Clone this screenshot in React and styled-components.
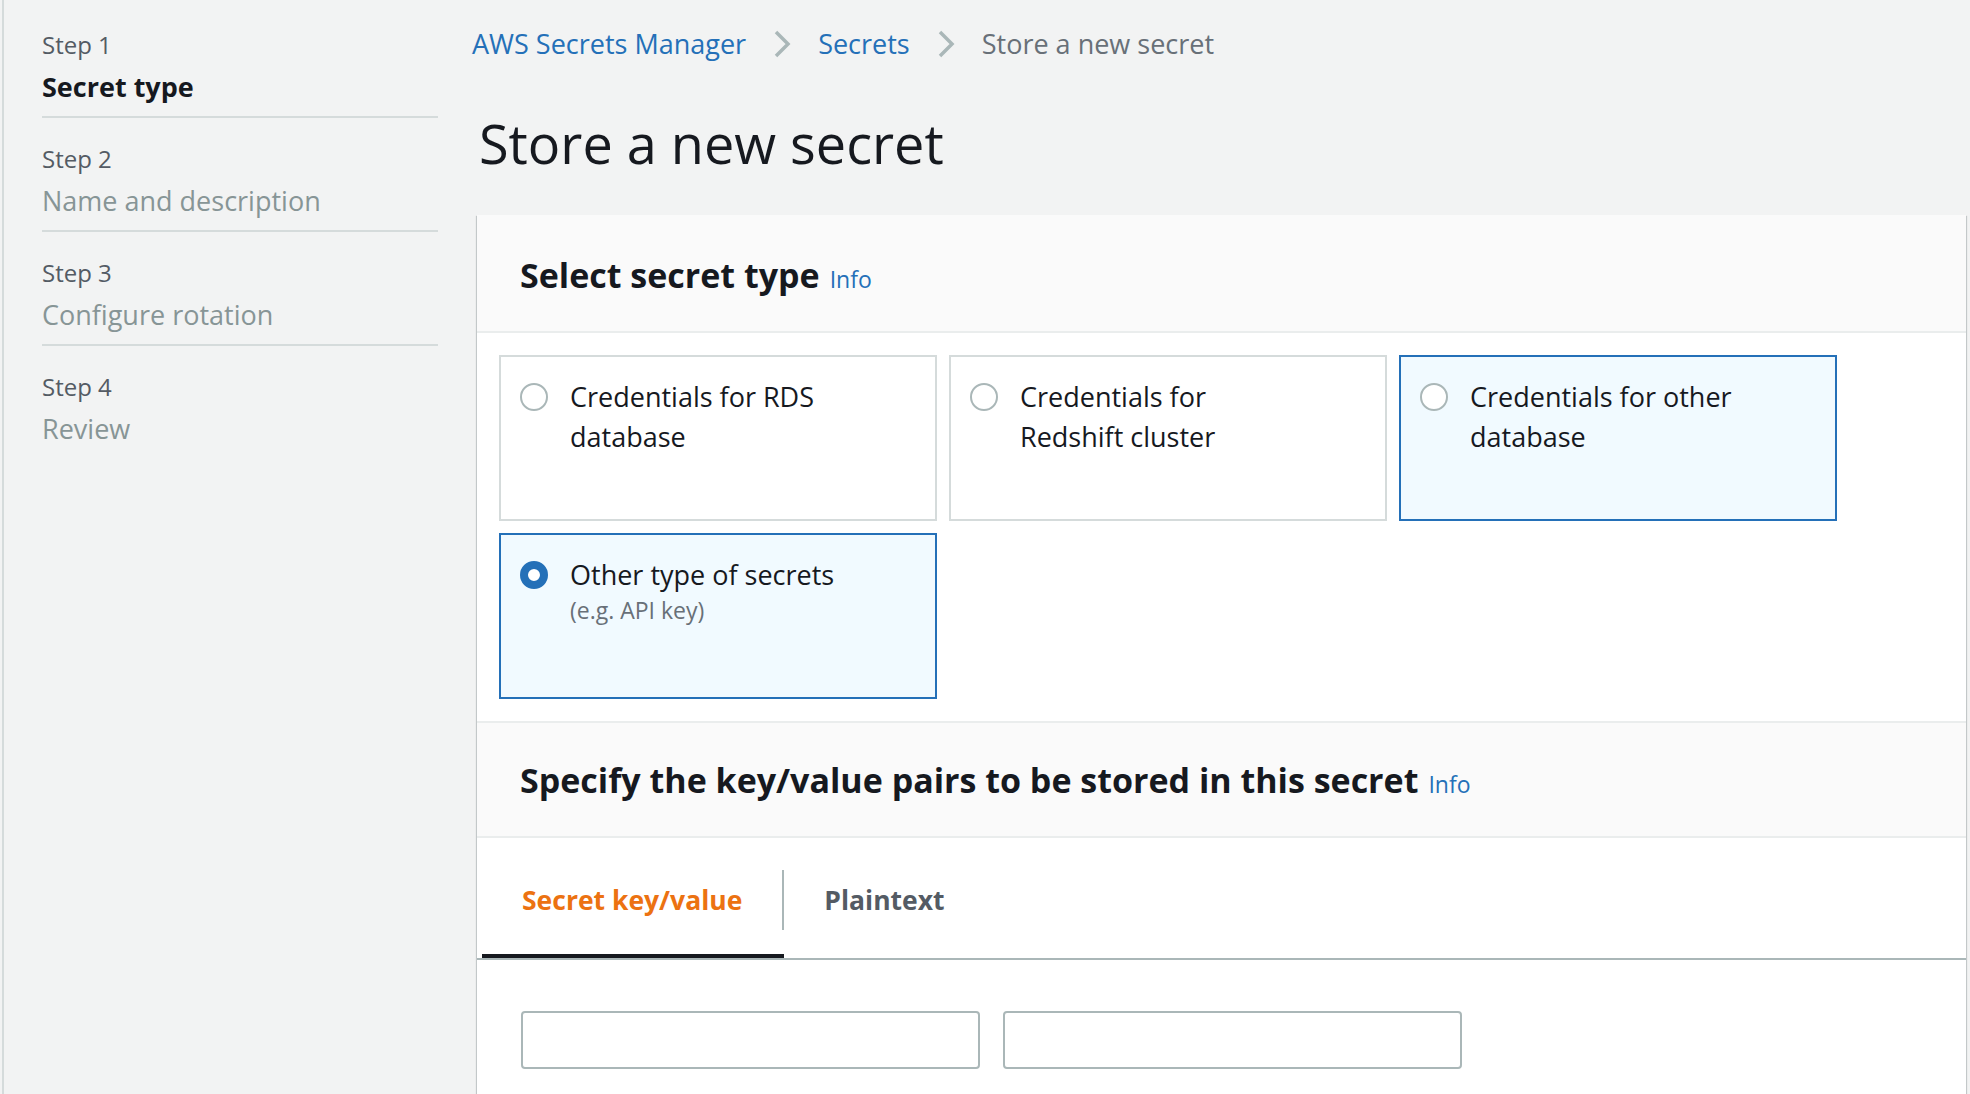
import React, { useState } from "react";
import styled, { createGlobalStyle } from "styled-components";

const GlobalStyle = createGlobalStyle`
  html, body {
    margin: 0;
    height: 100%;
    overflow: hidden;
  }
  body {
    background: #f2f3f3;
    font-family: "Open Sans", "Liberation Sans", sans-serif;
    color: #16191f;
  }
`;

const Page = styled("div")`
  display: grid;
  grid-template-columns: 472px 1fr;
  height: 100vh;
`;

const Sidebar = styled("nav")`
  margin-left: 2px;
  border-left: 2px solid #d5dbdb;
  padding: 4px 34px 0 38px;
`;

const StepItem = styled("div")`
  padding: 25px 0 9px;
  border-bottom: ${props => (props.last ? "none" : "2px solid #d5dbdb")};
`;

const StepLabel = styled("div")`
  font-size: 24px;
  line-height: 32px;
  color: #545b64;
`;

const StepTitle = styled("div")`
  margin-top: 6px;
  font-size: 27px;
  line-height: 40px;
  font-weight: ${props => (props.active ? 700 : 400)};
  color: ${props => (props.active ? "#16191f" : "#879596")};
`;

const Main = styled("main")`
  padding: 24px 4px 0 0;
  min-width: 0;
`;

const Breadcrumbs = styled("div")`
  display: flex;
  align-items: center;
  font-size: 27px;
  line-height: 40px;
`;

const Crumb = styled("span")`
  color: ${props => (props.current ? "#687078" : "#2470b8")};
`;

const Chevron = styled("svg")`
  margin: 0 27px;
  flex: none;
`;

const PageTitle = styled("h1")`
  margin: 47px 0 40px 7px;
  font-size: 54px;
  line-height: 64px;
  font-weight: 400;
  color: #16191f;
`;

const Card = styled("section")`
  margin-left: 5px;
  background: #fff;
  box-shadow: 0 1px 1px 0 rgba(0, 28, 36, 0.3), 1px 1px 1px 0 rgba(0, 28, 36, 0.15),
    -1px 1px 1px 0 rgba(0, 28, 36, 0.15);
`;

const CardHeader = styled("div")`
  background: #fafafa;
  padding: ${props => (props.divided ? "35px" : "38px")} 40px 34px 43px;
  border-top: ${props => (props.divided ? "2px solid #eaeded" : "none")};
  border-bottom: 2px solid #eaeded;
`;

const Heading = styled("h2")`
  margin: 0;
  font-size: 34px;
  line-height: 44px;
  font-weight: 700;
  color: #16191f;
`;

const InfoLink = styled("a")`
  margin-left: 10px;
  font-size: 23px;
  line-height: 1;
  font-weight: 400;
  color: #2470b8;
  text-decoration: none;
`;

const TileGrid = styled("div")`
  display: grid;
  grid-template-columns: repeat(3, 438px);
  grid-auto-rows: 166px;
  gap: 12px;
  padding: 22px 20px 22px 22px;
`;

const Tile = styled("label")`
  display: flex;
  align-items: flex-start;
  gap: 22px;
  box-sizing: border-box;
  padding: 20px 19px 0;
  border: 2px solid ${props => (props.highlighted ? "#2470b8" : "#d5dbdb")};
  background: ${props => (props.highlighted ? "#f1faff" : "#fff")};
  cursor: pointer;
`;

const Radio = styled("span")`
  flex: none;
  box-sizing: border-box;
  width: 28px;
  height: 28px;
  margin-top: 6px;
  border-radius: 50%;
  background: #fff;
  border: ${props => (props.checked ? "8px solid #2470b8" : "2px solid #aab7b8")};
`;

const TileText = styled("div")`
  max-width: 280px;
`;

const TileTitle = styled("div")`
  font-size: 27px;
  line-height: 40px;
  color: #16191f;
`;

const TileHint = styled("div")`
  font-size: 23px;
  line-height: 30px;
  color: #687078;
`;

const TabBar = styled("div")`
  display: flex;
  padding: 0 5px;
  border-bottom: 2px solid #aab7b8;
`;

const Tab = styled("button")`
  padding: 32px 0 24px;
  border: none;
  border-bottom: 4px solid ${props => (props.active ? "#16191f" : "transparent")};
  background: none;
  font-family: inherit;
  cursor: pointer;
`;

const TabLabel = styled("span")`
  display: block;
  padding: 0 40px;
  font-size: 26.5px;
  line-height: 60px;
  font-weight: 700;
  color: ${props => (props.active ? "#ec7211" : "#545b64")};
  border-right: ${props => (props.divider ? "2px solid #aab7b8" : "none")};
`;

const PairRow = styled("div")`
  display: flex;
  gap: 23px;
  padding: 51px 40px 40px 44px;
`;

const TextInput = styled("input")`
  box-sizing: border-box;
  width: 459px;
  height: 58px;
  border: 2px solid #aab7b8;
  border-radius: 4px;
  background: #fff;
  font-family: inherit;
  font-size: 24px;
  padding: 0 14px;
`;

const steps = [
  { label: "Step 1", title: "Secret type" },
  { label: "Step 2", title: "Name and description" },
  { label: "Step 3", title: "Configure rotation" },
  { label: "Step 4", title: "Review" }
];

const secretTypes = [
  { id: "rds", title: "Credentials for RDS database" },
  { id: "redshift", title: "Credentials for Redshift cluster" },
  { id: "other-db", title: "Credentials for other database", hover: true },
  { id: "other", title: "Other type of secrets", hint: "(e.g. API key)" }
];

const ChevronIcon = () => (
  <Chevron width="18" height="30" viewBox="0 0 18 30">
    <path d="M3 3 L15 15 L3 27" fill="none" stroke="#aab7b8" strokeWidth="3.5" />
  </Chevron>
);

export default function App() {
  const [selected, setSelected] = useState("other");
  const [tab, setTab] = useState("kv");

  return (
    <Page>
      <GlobalStyle />
      <Sidebar>
        {steps.map((s, i) => (
          <StepItem key={s.label} last={i === steps.length - 1}>
            <StepLabel>{s.label}</StepLabel>
            <StepTitle active={i === 0}>{s.title}</StepTitle>
          </StepItem>
        ))}
      </Sidebar>

      <Main>
        <Breadcrumbs>
          <Crumb>AWS Secrets Manager</Crumb>
          <ChevronIcon />
          <Crumb>Secrets</Crumb>
          <ChevronIcon />
          <Crumb current>Store a new secret</Crumb>
        </Breadcrumbs>

        <PageTitle>Store a new secret</PageTitle>

        <Card>
          <CardHeader>
            <Heading>
              Select secret type<InfoLink>Info</InfoLink>
            </Heading>
          </CardHeader>
          <TileGrid>
            {secretTypes.map(t => (
              <Tile
                key={t.id}
                highlighted={selected === t.id || t.hover}
                onClick={() => setSelected(t.id)}
              >
                <Radio checked={selected === t.id} />
                <TileText>
                  <TileTitle>{t.title}</TileTitle>
                  {t.hint && <TileHint>{t.hint}</TileHint>}
                </TileText>
              </Tile>
            ))}
          </TileGrid>

          <CardHeader divided>
            <Heading>
              Specify the key/value pairs to be stored in this secret
              <InfoLink>Info</InfoLink>
            </Heading>
          </CardHeader>
          <TabBar>
            <Tab active={tab === "kv"} onClick={() => setTab("kv")}>
              <TabLabel active={tab === "kv"} divider>
                Secret key/value
              </TabLabel>
            </Tab>
            <Tab active={tab === "plain"} onClick={() => setTab("plain")}>
              <TabLabel active={tab === "plain"}>Plaintext</TabLabel>
            </Tab>
          </TabBar>
          <PairRow>
            <TextInput />
            <TextInput />
          </PairRow>
        </Card>
      </Main>
    </Page>
  );
}
